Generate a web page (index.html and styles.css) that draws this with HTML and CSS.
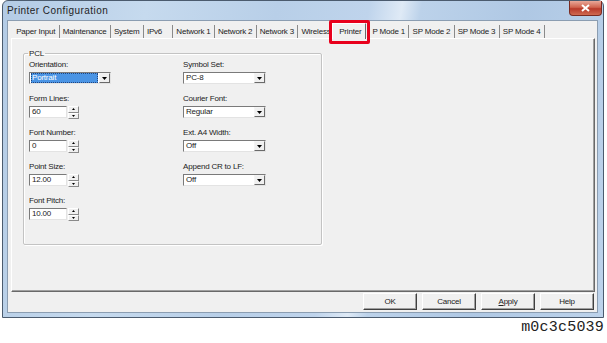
FILE: index.html
```html
<!DOCTYPE html>
<html lang="en">
<head>
  <meta charset="UTF-8" />
  <title>Printer Configuration</title>
  <link rel="stylesheet" href="styles.css">
</head>
<body>
  <div class="window" role="dialog" aria-label="Printer Configuration">
    <div class="titlebar">
      <span class="title">Printer Configuration</span>
      <button type="button" class="close" aria-label="Close">
        <svg width="9" height="8" viewBox="0 0 9 8"><path d="M1 1l7 6M8 1L1 7" stroke="#fff" stroke-width="2" fill="none"/></svg>
      </button>
    </div>

    <div class="client">
      <div class="tabs" role="tablist">
        <div class="tab">Paper Input</div>
        <div class="tab">Maintenance</div>
        <div class="tab">System</div>
        <div class="tab tab-wide">IPv6</div>
        <div class="tab">Network 1</div>
        <div class="tab">Network 2</div>
        <div class="tab">Network 3</div>
        <div class="tab tab-clipped">Wireless</div>
        <div class="tab selected">Printer</div>
        <div class="tab">P Mode 1</div>
        <div class="tab">SP Mode 2</div>
        <div class="tab">SP Mode 3</div>
        <div class="tab">SP Mode 4</div>
      </div>

      <div class="page">
        <fieldset class="group">
          <legend>PCL</legend>
          <div class="cols">
            <div class="col col-left">
              <div class="field">
                <label>Orientation:</label>
                <div class="combo focused">
                  <span class="value">Portrait</span>
                  <span class="drop"><svg width="5" height="3" viewBox="0 0 5 3"><path d="M0 0h5L2.5 3z"/></svg></span>
                </div>
              </div>
              <div class="field">
                <label>Form Lines:</label>
                <div class="spin">
                  <span class="box">60</span>
                  <span class="arrows">
                    <span><svg width="3" height="2" viewBox="0 0 3 2"><path d="M1.5 0L3 2H0z"/></svg></span>
                    <span><svg width="3" height="2" viewBox="0 0 3 2"><path d="M0 0h3L1.5 2z"/></svg></span>
                  </span>
                </div>
              </div>
              <div class="field">
                <label>Font Number:</label>
                <div class="spin">
                  <span class="box">0</span>
                  <span class="arrows">
                    <span><svg width="3" height="2" viewBox="0 0 3 2"><path d="M1.5 0L3 2H0z"/></svg></span>
                    <span><svg width="3" height="2" viewBox="0 0 3 2"><path d="M0 0h3L1.5 2z"/></svg></span>
                  </span>
                </div>
              </div>
              <div class="field">
                <label>Point Size:</label>
                <div class="spin">
                  <span class="box">12.00</span>
                  <span class="arrows">
                    <span><svg width="3" height="2" viewBox="0 0 3 2"><path d="M1.5 0L3 2H0z"/></svg></span>
                    <span><svg width="3" height="2" viewBox="0 0 3 2"><path d="M0 0h3L1.5 2z"/></svg></span>
                  </span>
                </div>
              </div>
              <div class="field">
                <label>Font Pitch:</label>
                <div class="spin">
                  <span class="box">10.00</span>
                  <span class="arrows">
                    <span><svg width="3" height="2" viewBox="0 0 3 2"><path d="M1.5 0L3 2H0z"/></svg></span>
                    <span><svg width="3" height="2" viewBox="0 0 3 2"><path d="M0 0h3L1.5 2z"/></svg></span>
                  </span>
                </div>
              </div>
            </div>

            <div class="col col-right">
              <div class="field">
                <label>Symbol Set:</label>
                <div class="combo wide">
                  <span class="value">PC-8</span>
                  <span class="drop"><svg width="5" height="3" viewBox="0 0 5 3"><path d="M0 0h5L2.5 3z"/></svg></span>
                </div>
              </div>
              <div class="field">
                <label>Courier Font:</label>
                <div class="combo wide">
                  <span class="value">Regular</span>
                  <span class="drop"><svg width="5" height="3" viewBox="0 0 5 3"><path d="M0 0h5L2.5 3z"/></svg></span>
                </div>
              </div>
              <div class="field">
                <label>Ext. A4 Width:</label>
                <div class="combo wide">
                  <span class="value">Off</span>
                  <span class="drop"><svg width="5" height="3" viewBox="0 0 5 3"><path d="M0 0h5L2.5 3z"/></svg></span>
                </div>
              </div>
              <div class="field">
                <label>Append CR to LF:</label>
                <div class="combo wide">
                  <span class="value">Off</span>
                  <span class="drop"><svg width="5" height="3" viewBox="0 0 5 3"><path d="M0 0h5L2.5 3z"/></svg></span>
                </div>
              </div>
            </div>
          </div>
        </fieldset>
      </div>

      <div class="actions">
        <button type="button" class="btn">OK</button>
        <button type="button" class="btn">Cancel</button>
        <button type="button" class="btn"><u>A</u>pply</button>
        <button type="button" class="btn">Help</button>
      </div>
    </div>
  </div>

  <div class="figure-id">m0c3c5039</div>
</body>
</html>
```

FILE: styles.css
```css
/* Base */
*, *::before, *::after {
  box-sizing: border-box;
}
body {
  margin: 0;
  background: #fff;
  color: #222;
  font-family: "Liberation Sans", Arial, sans-serif;
  font-size: 8px;
  letter-spacing: -0.2px;
}

/* Window frame */
.window {
  margin-left: 2px;
  width: 602px;
  height: 318px;
  display: flex;
  flex-direction: column;
  padding: 0 5px 4px 4px;
  border: 1px solid #4b5b6e;
  border-radius: 6px 6px 0 0;
  background:
    linear-gradient(100deg, #b3cbe5 0%, #c6daee 22%, #b8cfe8 42%, #bfd4ec 56%, #dfeaf6 61%, #bcd2ea 64%, #afc8e4 80%, #bdd3eb 100%);
}
.titlebar {
  height: 19px;
  display: flex;
  justify-content: space-between;
  align-items: flex-start;
}
.title {
  font-size: 10px;
  letter-spacing: 0.45px;
  line-height: 19px;
  color: #1e1e1e;
}
.close {
  width: 33px;
  height: 15px;
  margin-right: -4px;
  padding: 0;
  border: 1px solid #7a2b22;
  border-top: none;
  border-radius: 0 0 4px 4px;
  background: linear-gradient(#e9a899, #d0644f 45%, #b83a2a 55%, #cf6a52);
  display: flex;
  align-items: center;
  justify-content: center;
}

/* Client area */
.client {
  flex: 1;
  display: flex;
  flex-direction: column;
  padding: 2px 2px 0 3px;
  background: #f0f0f0;
  border: 1px solid #8b9db1;
}

/* Tabs */
.tabs {
  height: 15px;
  display: flex;
  align-items: flex-end;
  padding-left: 2px;
  position: relative;
  z-index: 1;
}
.tab {
  height: 13px;
  line-height: 13px;
  padding: 0 3.3px 0 3.2px;
  border-right: 1px solid #8a8a8a;
  white-space: nowrap;
}
.tab-wide {
  padding-right: 10px;
}
.tab-clipped {
  width: 34px;
  overflow: hidden;
  border-right: none;
}
.tab.selected {
  position: relative;
  height: 16px;
  line-height: 15px;
  margin: 0 3px -1px 0;
  padding: 0 4px 0 6px;
  background: #f0f0f0;
  border: 1px solid #fff;
  border-right-color: #6a6a6a;
  border-bottom: none;
}
/* red annotation frame around the active tab */
.tab.selected::after {
  content: "";
  position: absolute;
  top: -4px;
  left: -4px;
  right: -5px;
  bottom: -5px;
  border: 3px solid #e8001c;
  border-radius: 2px;
}

/* Tab page */
.page {
  height: 254px;
  border: 1px solid;
  border-color: #fff #696969 #696969 #fff;
  box-shadow: inset -1px -1px #a0a0a0;
}
.group {
  margin: 9px 0 0 11px;
  width: 299px;
  height: 197px;
  padding: 0 0 0 5px;
  border: 1px solid #c3c3c3;
  border-radius: 2px;
  box-shadow: 1px 1px #fff, inset 1px 1px #fff;
}
.group legend {
  margin-left: -1px;
  padding: 0 1px;
  line-height: 11px;
}
.cols {
  display: flex;
}
.col {
  display: flex;
  flex-direction: column;
  gap: 9px;
}
.col-left {
  width: 154px;
}
.field label {
  display: block;
  line-height: 11px;
  margin-bottom: 2px;
}

/* Combo boxes */
.combo {
  width: 82px;
  height: 12px;
  display: flex;
  background: #fff;
  border: 1px solid;
  border-color: #7a7a7a #e3e3e3 #e3e3e3 #7a7a7a;
}
.combo.wide {
  width: 83px;
}
.combo .value {
  flex: 1;
  padding-left: 2px;
  line-height: 10px;
}
.combo.focused .value {
  margin: 0 1px 0 1px;
  padding-left: 1px;
  background: #4a94e4;
  color: #fff;
  outline: 1px dotted #22457e;
  outline-offset: -1px;
}
.drop {
  width: 11px;
  display: flex;
  align-items: center;
  justify-content: center;
  background: #f0f0f0;
  border: 1px solid;
  border-color: #f4f4f4 #6a6a6a #6a6a6a #f4f4f4;
}

/* Spin boxes */
.spin {
  height: 12px;
  display: flex;
  align-items: flex-start;
  gap: 1px;
}
.spin .box {
  width: 38px;
  height: 12px;
  padding-left: 2px;
  line-height: 10px;
  background: #fff;
  border: 1px solid;
  border-color: #7a7a7a #e3e3e3 #e3e3e3 #7a7a7a;
}
.arrows {
  width: 11px;
  height: 13px;
  display: flex;
  flex-direction: column;
}
.arrows span {
  flex: 1;
  display: flex;
  align-items: center;
  justify-content: center;
  background: #f0f0f0;
  border: 1px solid;
  border-color: #fff #8a8a8a #8a8a8a #fff;
}

/* Dialog buttons */
.actions {
  display: flex;
  justify-content: flex-end;
  gap: 5px;
  margin-top: 1px;
  padding-right: 1px;
}
.btn {
  width: 54px;
  height: 17px;
  padding: 0;
  font: inherit;
  letter-spacing: inherit;
  color: #222;
  background: #f0f0f0;
  border: 1px solid;
  border-color: #fff #404040 #404040 #fff;
  box-shadow: inset -1px -1px #a0a0a0;
}

/* Figure number under the screenshot */
.figure-id {
  margin-top: 2px;
  padding-right: 3px;
  text-align: right;
  font-family: "Liberation Mono", monospace;
  font-size: 15px;
  line-height: 15px;
  letter-spacing: 0.2px;
}
```
